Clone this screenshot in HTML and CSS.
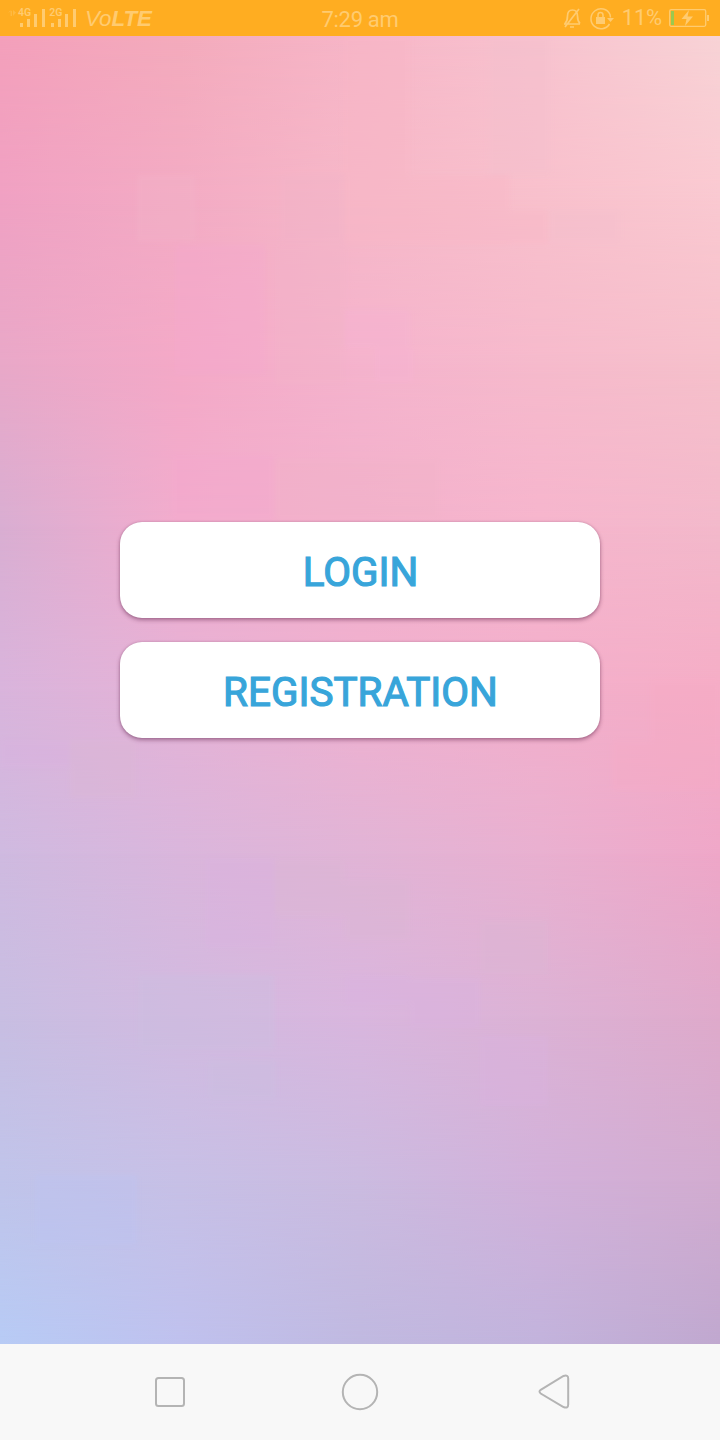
FILE: index.html
```html
<!DOCTYPE html>
<html lang="en">
<head>
<meta charset="utf-8">
<title>Welcome</title>
<link rel="stylesheet" href="styles.css">
</head>
<body>
<header class="status">
  <div class="status-left">
    <svg class="signal" width="78" height="36" viewBox="0 0 78 36">
      <path class="faint" d="M8 13l2.500-3v6h1.500V10.500zM13 10v6l3-3.500z"/>
      <path d="M20 23h3v4h-3zM27 19h3v8h-3zM34 14h3v13h-3zM42 9h3v18h-3zM51 23h3v4h-3zM58 19h3v8h-3zM65 14h3v13h-3zM73 9h3v18h-3z"/>
      <text x="18" y="16.300">4G</text>
      <text x="49.300" y="16.300">2G</text>
    </svg>
    <span class="volte">Vo<b>LTE</b></span>
  </div>
  <span class="time">7:29 am</span>
  <div class="status-right">
    <svg width="22" height="36" viewBox="0 0 22 36" fill="none" stroke="currentColor" stroke-width="1.700">
      <path d="M2 24h16M3 23.500c2-2 2.500-4 2.500-7.500 0-4 2-6 5-6s5 2 5 6c0 3.500.5 5.500 2.500 7.500M3 27L17 9M8 27h4"/>
    </svg>
    <svg class="lock" width="26" height="36" viewBox="0 0 26 36" fill="none" stroke="currentColor" stroke-width="1.500">
      <path d="M20.500 24A10 10 0 1 1 21 14.500l.5 3"/>
      <path fill="currentColor" stroke="none" d="M18 18h7l-3.500 4zM7 17h9v7H7z"/>
      <path d="M9 17v-2a2.500 2.500 0 0 1 5 0v2"/>
    </svg>
    <span class="percent">11%</span>
    <svg width="41" height="36" viewBox="0 0 41 36">
      <rect x=".7" y="9.700" width="36" height="16.600" rx="1.500" fill="none" stroke="currentColor" stroke-width="1.300"/>
      <path class="charge" d="M2 11h3v14H2z"/>
      <path fill="currentColor" d="M38 15h2v6h-2zM20 10l-7.500 9h5l-1.500 7 8-9.500h-5.500z"/>
    </svg>
  </div>
</header>
<main class="screen">
  <div class="mesh" aria-hidden="true">
    <i class="band b0"></i><i class="band b1"></i><i class="band b2"></i><i class="band b3"></i><i class="band b4"></i><i class="band b5"></i><i class="band b6"></i><i class="band b7"></i><i class="band b8"></i>
    <svg class="patches" width="720" height="1308" viewBox="0 36 720 1308">
      <path fill="#f2b3c8" d="M275 245h70v140h-70zM280 175h64v68h-64zM137 175h58v66h-58zM275 458h165v62H275z"/>
      <path fill="#f4a8ce" d="M175 245h90v130h-90zM172 455h102v64H172z"/>
      <path fill="#f9b6c6" d="M343 36h67v139h-67zM345 175h165v70H345zM510 210h38v34h-38z"/>
      <path fill="#f3bfcd" d="M488 36h62v139h-62zM550 210h70v33h-70z"/>
      <path fill="#f6b2d4" d="M345 310h65v38h-65zM375 348h38v34h-38z"/>
      <path fill="#dbb7d4" d="M70 740h66v58H70zM275 860h70v56h-70zM345 880h65v60h-65zM480 920h68v54h-68z"/>
      <path fill="#dab2e0" d="M0 740h70v28H0zM205 858h70v90h-70zM345 975h65v30h-65zM410 978h70v50h-70zM480 1036h68v70h-68z"/>
      <path fill="#cbbfe0" d="M138 975h136v75H138zM208 1060h68v40h-68z"/>
      <path fill="#bcc3f2" d="M35 1175h102v70H35z"/>
      <path fill="#f7abc5" d="M612 740h108v50H612zM650 680h70v60h-70z"/>
    </svg>
  </div>
  <div class="actions">
    <button class="action"><span>LOGIN</span></button>
    <button class="action"><span>REGISTRATION</span></button>
  </div>
</main>
<nav class="navbar">
  <svg width="40" height="40" viewBox="0 0 40 40"><rect x="6" y="6" width="28" height="28" rx="2.500"/></svg>
  <svg width="40" height="40" viewBox="0 0 40 40"><circle cx="20" cy="20" r="17.200"/></svg>
  <svg width="40" height="40" viewBox="0 0 40 40"><path d="M10.700 17.800L33.500 4Q38.200 2.400 38.200 6.500V32.500Q38.200 37 33.500 35L10.700 21.500Q8.300 19.500 10.700 17.800z"/></svg>
</nav>
</body>
</html>
```
FILE: styles.css
```css
* { box-sizing: border-box; }
body {
  margin: 0;
  width: 720px;
  height: 1440px;
  display: grid;
  grid-template-rows: 36px 1308px 96px;
  overflow: hidden;
  font-family: Roboto, sans-serif;
}
.status {
  display: grid;
  grid-template-columns: 1fr auto 1fr;
  background: #ffad21;
  color: #ffcb70;
  line-height: 36px;
}
.status svg { display: block; flex: none; }
.status-left, .status-right { display: flex; }
.status-right { justify-content: flex-end; padding-right: 10px; }
.signal { fill: currentColor; font-weight: 600; font-size: 10.5px; }
.faint { opacity: .4; }
.volte {
  margin-left: 7px;
  padding-top: 1px;
  font-family: "Liberation Sans", sans-serif;
  font-size: 22.3px;
  font-style: italic;
}
.time { font-size: 22px; padding-top: 2px; letter-spacing: -.3px; }
.lock { margin-left: 5px; }
.percent { font-size: 22px; margin: 0 7px 0 7px; letter-spacing: -.2px; }
.charge { fill: #9bc94f; }
.screen { display: grid; overflow: hidden; }
.screen > * { grid-area: 1 / 1; }
.mesh { display: grid; }
.patches { grid-area: 1 / 1; opacity: .35; filter: blur(2px); overflow: hidden; }
.band {
  grid-area: 1 / 1;
  -webkit-mask-image: linear-gradient(transparent var(--from), #000 var(--to));
  mask-image: linear-gradient(transparent var(--from), #000 var(--to));
}
.b0 { -webkit-mask-image: none; mask-image: none; background: linear-gradient(90deg, #f4a0bb, #f4abbc, #f7b6c8, #f8c3cf, #f8d3d6); }
.b1 { --from: 0%; --to: 12.5%; background: linear-gradient(90deg, #f0a1c3, #f3abc4, #f6b8c8, #f8c0cc, #fac9d1); }
.b2 { --from: 12.5%; --to: 25%; background: linear-gradient(90deg, #e9a8c8, #f4a9c7, #f5b3cd, #f6bacc, #f6c0cb); }
.b3 { --from: 25%; --to: 37.5%; background: linear-gradient(90deg, #d9aed2, #f2accd, #f2b1cc, #f6b5cd, #f3b9cb); }
.b4 { --from: 37.5%; --to: 50%; background: linear-gradient(90deg, #d9b4dc, #e5b2d6, #f0b0cf, #f3afcb, #f5adc6); }
.b5 { --from: 50%; --to: 62.5%; background: linear-gradient(90deg, #cfbae0, #dab6dc, #e1b4d6, #e9b0d0, #efa7c8); }
.b6 { --from: 62.5%; --to: 75%; background: linear-gradient(90deg, #c8bee2, #d2bae0, #d9b6de, #dcb2d5, #dfaacb); }
.b7 { --from: 75%; --to: 87.5%; background: linear-gradient(90deg, #c0c4ea, #c7c0e6, #cbbbe0, #d2b1da, #d2acd0); }
.b8 { --from: 87.5%; --to: 100%; background: linear-gradient(90deg, #b7cbf5, #bfc1ee, #c0b9e0, #c2b3dc, #c0a8cf); }
.actions {
  z-index: 1;
  display: flex;
  flex-direction: column;
  align-items: center;
  gap: 24px;
  padding-top: 486px;
}
.action {
  width: 480px;
  height: 96px;
  padding: 6px 0 0 1px;
  border: 0;
  border-radius: 22px;
  background: #fff;
  box-shadow: 0 2px 4px rgba(80, 20, 60, .45), 0 0 2px rgba(80, 20, 60, .2);
  color: #38a5da;
  font: 400 40.4px/1 Roboto, sans-serif;
  -webkit-text-stroke: 1.2px #38a5da;
}
.navbar {
  display: flex;
  justify-content: center;
  align-items: center;
  gap: 150px;
  background: #f8f8f8;
}
.navbar svg { fill: none; stroke: #b4b4b4; stroke-width: 2; }
```
